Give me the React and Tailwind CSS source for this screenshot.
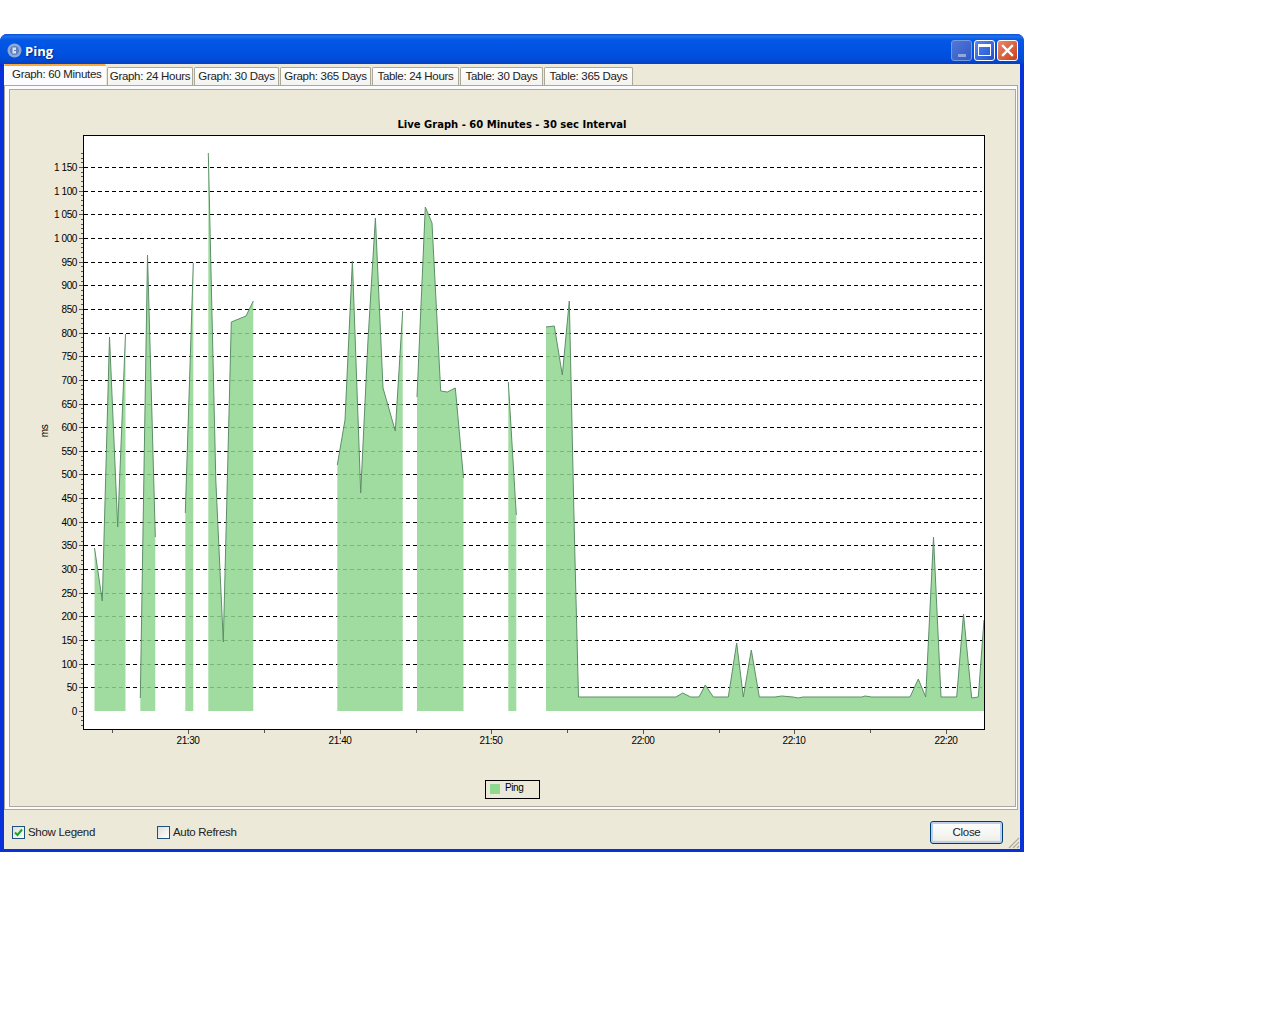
import React from "react";

const tabs = [
  { label: "Graph: 60 Minutes", w: "w-[102px]", active: true },
  { label: "Graph: 24 Hours", w: "w-[86px]" },
  { label: "Graph: 30 Days", w: "w-[85px]" },
  { label: "Graph: 365 Days", w: "w-[91px]" },
  { label: "Table: 24 Hours", w: "w-[87px]" },
  { label: "Table: 30 Days", w: "w-[83px]" },
  { label: "Table: 365 Days", w: "w-[89px]" },
];

const BASE = 711;

// top edge of each run of samples, in page pixels
const segments = [
  [[94.5, 548], [102.3, 601], [109.5, 337], [117.7, 527], [125.5, 334]],
  [[140.3, 698], [147.5, 255], [155.3, 537]],
  [[185.3, 513], [193.3, 263]],
  [[208.3, 153], [215.8, 480], [223.3, 642], [231.3, 322], [246, 316], [253.3, 301]],
  [[337.3, 465], [345, 420], [352.4, 261], [360.7, 493], [368, 340], [375.4, 218], [383, 388], [395.3, 431], [402.7, 311]],
  [[417, 397], [425.3, 207], [432, 223], [440.7, 391], [447.3, 392], [455.3, 388], [463.5, 478]],
  [[508.3, 382], [516.3, 515]],
  [
    [546, 327], [554.3, 326], [562.3, 375], [569.3, 301], [574.5, 540], [578.5, 697], [676, 697],
    [682.7, 693], [690.7, 697], [699, 697], [705.3, 685], [713.3, 697], [728.3, 697], [736.7, 643],
    [743.3, 697], [751.3, 650], [759.3, 697], [775, 697], [781.7, 696], [793, 697], [798.3, 698],
    [803, 697], [861.7, 697], [865, 696], [871.7, 697], [910, 697], [918.3, 679], [925.7, 697],
    [933.5, 537], [941, 697], [956.7, 697], [963.5, 614], [971.7, 698], [978.3, 697], [984, 620],
  ],
];

const yLabels = [];
for (let v = 0; v <= 1150; v += 50) yLabels.push(v);
const yPos = (v) => BASE - v * 0.47305;
const fmt = (v) => (v >= 1000 ? "1 " + String(v - 1000).padStart(3, "0") : String(v));

const minorY = [];
for (let v = -30; v <= 1180; v += 10) minorY.push(v);

const xMajor = [
  [188, "21:30"],
  [340, "21:40"],
  [491, "21:50"],
  [643, "22:00"],
  [794, "22:10"],
  [946, "22:20"],
];
const xMinor = [112, 264, 416, 567, 719, 870];

function Chart() {
  const font = "'Liberation Sans', Arial, sans-serif";
  return (
    <svg width="1005" height="716" viewBox="10 90 1005 716" className="block">
      <text x="512" y="128" textAnchor="middle" fontFamily="'DejaVu Sans', sans-serif" fontWeight="700" fontSize="10" fill="#000">
        Live Graph - 60 Minutes - 30 sec Interval
      </text>
      <rect x="83.5" y="135.5" width="901" height="594" fill="#fff" />

      {yLabels.map((v) =>
        v === 0 ? null : (
          <line key={v} x1="84" x2="982" y1={Math.round(yPos(v)) + 0.5} y2={Math.round(yPos(v)) + 0.5} stroke="#000" strokeWidth="1" strokeDasharray="4 3" />
        )
      )}

      {segments.map((pts, i) => {
        const top = pts.map((p) => p.join(",")).join(" ");
        const first = pts[0][0];
        const last = pts[pts.length - 1][0];
        return <polygon key={i} points={`${first},${BASE} ${top} ${last},${BASE}`} fill="#8fd68f" fillOpacity="0.85" />;
      })}

      {segments.map((pts, i) => (
        <polyline key={i} points={pts.map((p) => p.join(",")).join(" ")} fill="none" stroke="#5c8f68" strokeWidth="1" />
      ))}

      <rect x="83.5" y="135.5" width="901" height="594" fill="none" stroke="#000" />

      {minorY.map((v) => (
        <line key={v} x1={v % 50 === 0 ? 79 : 81} x2="83" y1={Math.round(yPos(v)) + 0.5} y2={Math.round(yPos(v)) + 0.5} stroke="#555" />
      ))}
      {yLabels.map((v) => (
        <text key={v} x="77" y={yPos(v) + 4} textAnchor="end" fontFamily={font} fontSize="10" letterSpacing="-0.4" fill="#000">
          {fmt(v)}
        </text>
      ))}
      <text transform="translate(48,431) rotate(-90)" textAnchor="middle" fontFamily={font} fontSize="10" letterSpacing="-0.4" fill="#000">
        ms
      </text>

      {xMinor.map((x) => (
        <line key={x} x1={x + 0.5} x2={x + 0.5} y1="730" y2="733" stroke="#555" />
      ))}
      {xMajor.map(([x, t]) => (
        <g key={t}>
          <line x1={x + 0.5} x2={x + 0.5} y1="730" y2="734" stroke="#555" />
          <text x={x} y="744" textAnchor="middle" fontFamily={font} fontSize="10" letterSpacing="-0.4" fill="#000">
            {t}
          </text>
        </g>
      ))}

      <rect x="485.5" y="780.5" width="54" height="18" fill="none" stroke="#000" />
      <rect x="490" y="784" width="10" height="10" fill="#90d990" />
      <text x="505" y="791" fontFamily={font} fontSize="10" letterSpacing="-0.4" fill="#000">
        Ping
      </text>
    </svg>
  );
}

function TitleButton({ children, className }) {
  return (
    <div className={"w-[21px] h-[21px] rounded-[3px] border flex items-center justify-center " + className}>
      {children}
    </div>
  );
}

function Checkbox({ checked, label, className }) {
  return (
    <div className={"flex items-center " + className}>
      <div className="w-[13px] h-[13px] border border-[#1c5180] bg-[linear-gradient(135deg,#dcdcd7,#ffffff)] flex items-center justify-center">
        {checked && (
          <svg width="9" height="9" viewBox="0 0 9 9">
            <path d="M1 4.5 L3.5 7 L8 1.5" fill="none" stroke="#21a121" strokeWidth="2" />
          </svg>
        )}
      </div>
      <span className="ml-[3px] text-[11.5px] tracking-[-0.3px] text-[#222] leading-none">{label}</span>
    </div>
  );
}

export default function App() {
  return (
    <div className="w-[1280px] h-[1024px] bg-white pt-[34px] font-['Liberation_Sans',Arial,sans-serif]">
      <div className="w-[1024px] h-[818px] rounded-t-[7px] bg-[#0831d9] px-[4px] pb-[3px] flex flex-col relative overflow-hidden">
        <div className="-mx-[4px] h-[30px] shrink-0 flex items-center pl-[7px] pr-[6px] bg-[linear-gradient(to_bottom,#0a50d8_0%,#1f6eea_8%,#0558e6_20%,#0053e2_55%,#024bd8_85%,#0340c4_100%)]">
          <svg width="15" height="15" viewBox="0 0 15 15" className="shrink-0 mt-[2px]">
            <circle cx="7.5" cy="7.5" r="7" fill="#8fa9d6" />
            <circle cx="7.5" cy="7.5" r="4.5" fill="#5d7fbf" />
            <path d="M5.5 4.5h3.5v2.5h-2v1h2v2.5h-3.5z" fill="#d7e2f3" />
          </svg>
          <span className="ml-[3px] mt-[4px] text-[13px] font-bold text-white leading-none font-['Open_Sans',sans-serif] [text-shadow:1px_1px_1px_#0a2a8a]">
            Ping
          </span>
          <div className="ml-auto flex gap-[2px] mt-[2px]">
            <TitleButton className="border-[#7a9ae0] bg-[linear-gradient(135deg,#5078d8,#3358c4)] items-end pb-[3px]">
              <div className="w-[8px] h-[3px] bg-[#8fa8e0]" />
            </TitleButton>
            <TitleButton className="border-white bg-[linear-gradient(135deg,#5a8af0,#1f4fc8)]">
              <div className="w-[13px] h-[12px] border border-white border-t-[3px]" />
            </TitleButton>
            <TitleButton className="border-white bg-[linear-gradient(135deg,#e88a6c,#c8401c)]">
              <svg width="13" height="13" viewBox="0 0 13 13">
                <path d="M2 2 L11 11 M11 2 L2 11" stroke="#fff" strokeWidth="2.4" strokeLinecap="square" />
              </svg>
            </TitleButton>
          </div>
        </div>

        <div className="flex-1 bg-[#ece9d8] flex flex-col">
          <div className="h-[21px] shrink-0 flex items-end gap-px">
            {tabs.map((t) =>
              t.active ? (
                <div key={t.label} className={t.w + " h-[21px] bg-[#fcfcfe] border-t-2 border-[#f7a83a] rounded-t-[2px] pl-[8px] pt-px text-[11.5px] tracking-[-0.3px] leading-[15px] text-[#222] whitespace-nowrap"}>
                  {t.label}
                </div>
              ) : (
                <div key={t.label} className={t.w + " h-[18px] bg-[linear-gradient(to_bottom,#ffffff,#f3f3ef)] border border-b-0 border-[#aca899] rounded-t-[2px] text-center text-[11.5px] tracking-[-0.3px] leading-[17px] text-[#222] whitespace-nowrap"}>
                  {t.label}
                </div>
              )
            )}
          </div>

          <div className="w-[1014px] h-[725px] shrink-0 bg-[#fcfcfe] border border-[#aca899] pl-[4px] pt-[3px]">
            <div className="w-[1007px] h-[718px] border border-[#aca899] bg-[#ece9d8]">
              <Chart />
            </div>
          </div>

          <div className="flex-1 flex items-center pl-[8px] pr-[17px] pt-[6px] relative">
            <Checkbox checked label="Show Legend" className="w-[145px]" />
            <Checkbox label="Auto Refresh" />
            <div className="ml-auto w-[73px] h-[23px] rounded-[3px] border border-[#003c74] bg-[linear-gradient(to_bottom,#ffffff,#f0f0ea_85%,#d6d0c5)] shadow-[inset_0_0_0_2px_#bcd0ee] flex items-center justify-center text-[11.5px] tracking-[-0.3px] text-[#222]">
              Close
            </div>
            <svg width="12" height="12" viewBox="0 0 12 12" className="absolute right-0 bottom-0">
              <path d="M11 1 L1 11 M11 5 L5 11 M11 9 L9 11" stroke="#aca899" strokeWidth="1.2" />
            </svg>
          </div>
        </div>
      </div>
    </div>
  );
}
